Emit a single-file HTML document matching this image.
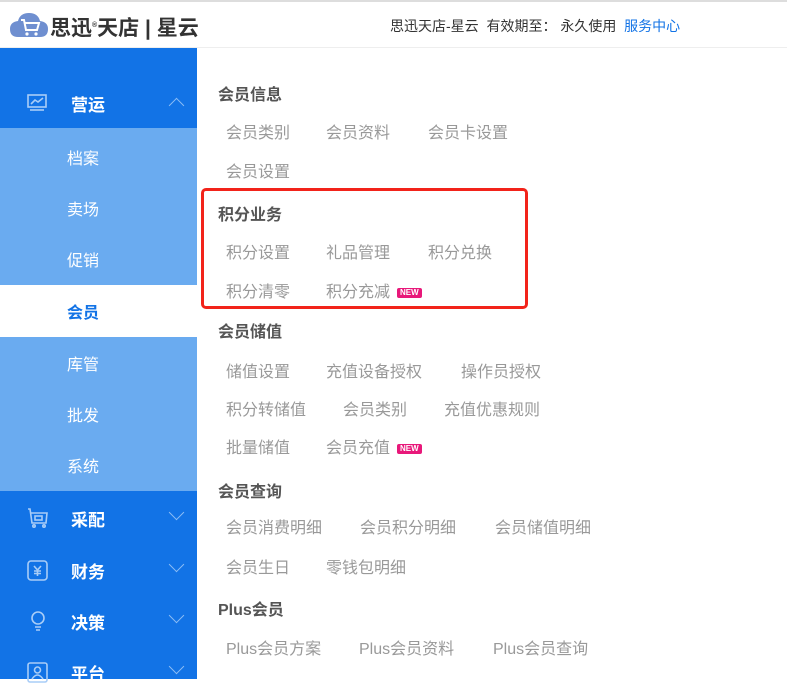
<!DOCTYPE html>
<html><head><meta charset="utf-8"><style>
*{margin:0;padding:0;box-sizing:border-box}
body{width:787px;height:679px;overflow:hidden;background:#fff;font-family:"Liberation Sans","Noto Sans CJK SC",sans-serif;position:relative}
.topline{position:absolute;left:0;top:0;width:787px;height:2px;background:#ddd}
.hdr{position:absolute;top:2px;left:0;width:787px;height:46px;border-bottom:1px solid #eee}
.logo{position:absolute;left:10px;top:9px}
.brand{position:absolute;left:50px;top:10px;font-size:21px;font-weight:bold;color:#333}
.info{position:absolute;left:390px;top:14px;font-size:14px;color:#333}
.info span{color:#1273e6}
.side{position:absolute;left:0;top:48px;width:197px;height:631px;background:#1273e6}
.row{position:absolute;left:0;width:197px;height:51px;color:#fff;font-size:17px;font-weight:bold}
.row .t{position:absolute;left:71px;top:12px}
.sub{position:absolute;left:0;top:80px;width:197px;height:363px;background:#6aabf0}
.si{position:absolute;left:67px;font-size:16px;color:#fff;width:100px}
.act{position:absolute;left:0;top:237px;width:197px;height:52px;background:#fff}
.chev{position:absolute;left:171px;width:11px;height:11px;border-left:1.5px solid #8cbdf5;border-top:1.5px solid #8cbdf5}
.h{position:absolute;left:218px;font-size:16px;font-weight:bold;color:#555}
.i{position:absolute;font-size:16px;color:#999;white-space:nowrap}
.new{display:inline-block;background:#e8187a;color:#fff;font-size:8px;font-weight:bold;padding:0 3px;border-radius:2px;line-height:10px;vertical-align:middle;margin-left:7px}
.box{position:absolute;left:201px;top:188px;width:327px;height:121px;border:3px solid #f2231a;border-radius:5px}
svg.ic{position:absolute;left:27px}
</style></head><body>
<div class="topline"></div>
<div class="hdr">
<svg class="logo" width="38" height="28" viewBox="0 0 38 28"><path d="M8 26 Q0 26 0 18 Q0 11 8 10 Q10 2 19 2 Q28 2 30 10 Q38 11 38 18 Q38 26 30 26Z" fill="#6f8fd0"/><path d="M11 9 L14 9 L16 19 L27 19 L29 12 L15 12" stroke="#fff" stroke-width="2" fill="none"/><circle cx="17" cy="23" r="1.6" fill="#fff"/><circle cx="26" cy="23" r="1.6" fill="#fff"/></svg>
<div class="brand">思迅<sup style="font-size:7px">®</sup>天店 | 星云</div>
<div class="info">思迅天店-星云&nbsp;&nbsp;有效期至：&nbsp;永久使用&nbsp;&nbsp;<span>服务中心</span></div>
</div>
<div class="side">
<div class="sub"></div>
<div class="act"></div>
<div class="row" style="top:31px"><svg class="ic" style="top:15px" width="20" height="18" viewBox="0 0 20 18" fill="none" stroke="#a9cdf7" stroke-width="1.6"><rect x="1" y="1" width="18" height="12"/><path d="M4 10 L8 6 L11 8 L16 4"/><path d="M3 16 H17"/></svg><span class="t">营运</span><div class="chev" style="top:21px;transform:rotate(45deg)"></div></div>
<div class="si" style="top:97px">档案</div>
<div class="si" style="top:148px">卖场</div>
<div class="si" style="top:199px">促销</div>
<div class="si" style="top:251px;color:#1273e6;font-weight:bold">会员</div>
<div class="si" style="top:303px">库管</div>
<div class="si" style="top:354px">批发</div>
<div class="si" style="top:405px">系统</div>
<div class="row" style="top:446px"><svg class="ic" style="top:14px" width="22" height="22" viewBox="0 0 22 22" fill="none" stroke="#a9cdf7" stroke-width="1.6"><path d="M1 1 L3 1 L5 15 L19 15 L20 5 L4 5"/><rect x="8" y="8" width="7" height="4"/><circle cx="7" cy="18" r="1.2"/><circle cx="17" cy="18" r="1.2"/></svg><span class="t">采配</span><div class="chev" style="top:13px;transform:rotate(225deg)"></div></div>
<div class="row" style="top:498px"><svg class="ic" style="top:14px" width="22" height="22" viewBox="0 0 22 22" fill="none" stroke="#a9cdf7" stroke-width="1.6"><rect x="1" y="1" width="19" height="19" rx="3"/><path d="M7 6 L10.5 10 L14 6 M10.5 10 V16 M7 11 H14 M7 13.5 H14"/></svg><span class="t">财务</span><div class="chev" style="top:13px;transform:rotate(225deg)"></div></div>
<div class="row" style="top:549px"><svg class="ic" style="top:13px" width="22" height="22" viewBox="0 0 22 22" fill="none" stroke="#a9cdf7" stroke-width="1.6"><circle cx="11" cy="8" r="6"/><path d="M8 17 H14 M9 20 H13"/></svg><span class="t">决策</span><div class="chev" style="top:13px;transform:rotate(225deg)"></div></div>
<div class="row" style="top:600px"><svg class="ic" style="top:14px" width="22" height="22" viewBox="0 0 22 22" fill="none" stroke="#a9cdf7" stroke-width="1.6"><rect x="1" y="1" width="19" height="19" rx="2"/><circle cx="10.5" cy="8" r="3"/><path d="M5 17 Q10.5 9 16 17"/></svg><span class="t">平台</span><div class="chev" style="top:13px;transform:rotate(225deg)"></div></div>
</div>

<div class="h" style="top:81px">会员信息</div>
<div class="i" style="left:226px;top:119px">会员类别</div>
<div class="i" style="left:326px;top:119px">会员资料</div>
<div class="i" style="left:428px;top:119px">会员卡设置</div>
<div class="i" style="left:226px;top:158px">会员设置</div>
<div class="h" style="top:201px">积分业务</div>
<div class="i" style="left:226px;top:239px">积分设置</div>
<div class="i" style="left:326px;top:239px">礼品管理</div>
<div class="i" style="left:428px;top:239px">积分兑换</div>
<div class="i" style="left:226px;top:278px">积分清零</div>
<div class="i" style="left:326px;top:278px">积分充减<span class="new">NEW</span></div>
<div class="box"></div>
<div class="h" style="top:318px">会员储值</div>
<div class="i" style="left:226px;top:358px">储值设置</div>
<div class="i" style="left:326px;top:358px">充值设备授权</div>
<div class="i" style="left:461px;top:358px">操作员授权</div>
<div class="i" style="left:226px;top:396px">积分转储值</div>
<div class="i" style="left:343px;top:396px">会员类别</div>
<div class="i" style="left:444px;top:396px">充值优惠规则</div>
<div class="i" style="left:226px;top:434px">批量储值</div>
<div class="i" style="left:326px;top:434px">会员充值<span class="new">NEW</span></div>
<div class="h" style="top:478px">会员查询</div>
<div class="i" style="left:226px;top:514px">会员消费明细</div>
<div class="i" style="left:360px;top:514px">会员积分明细</div>
<div class="i" style="left:495px;top:514px">会员储值明细</div>
<div class="i" style="left:226px;top:554px">会员生日</div>
<div class="i" style="left:326px;top:554px">零钱包明细</div>
<div class="h" style="top:596px">Plus会员</div>
<div class="i" style="left:226px;top:635px">Plus会员方案</div>
<div class="i" style="left:359px;top:635px">Plus会员资料</div>
<div class="i" style="left:493px;top:635px">Plus会员查询</div>
</body></html>
